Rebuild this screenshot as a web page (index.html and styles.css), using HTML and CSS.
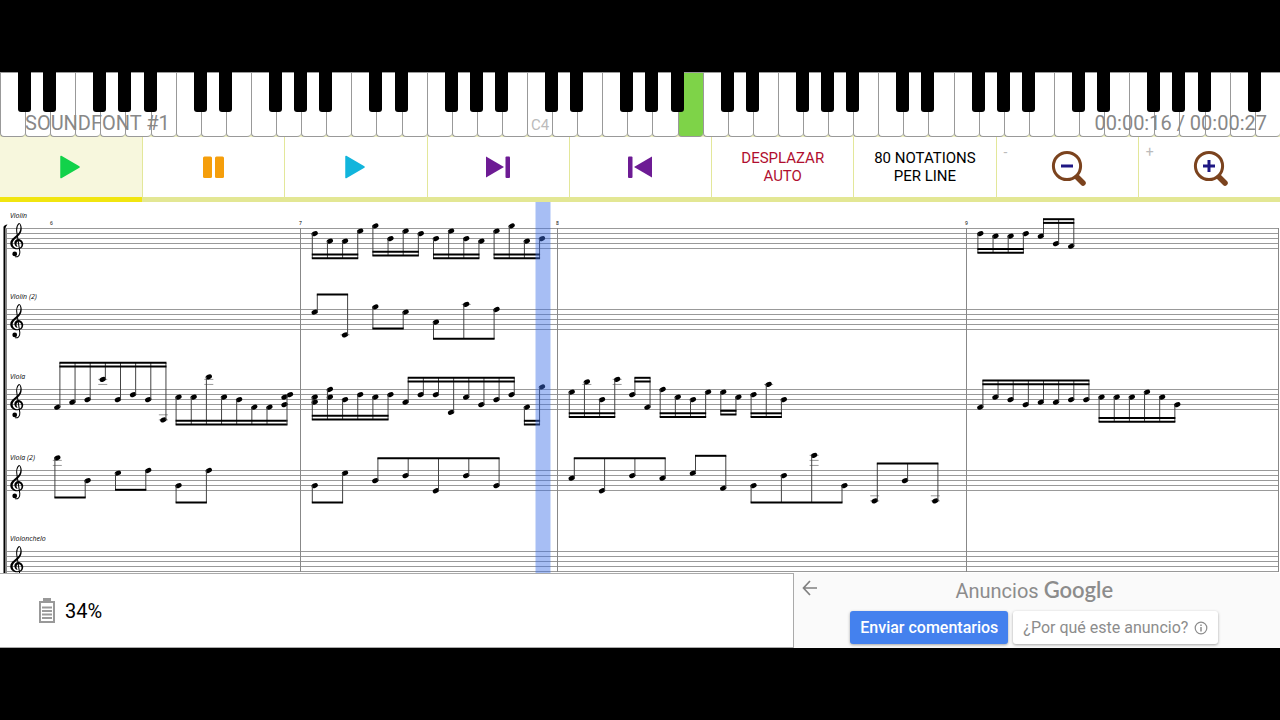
FILE: index.html
```html
<!DOCTYPE html>
<html lang="es">
<head>
<meta charset="UTF-8">
<meta name="viewport" content="width=device-width, initial-scale=1.0">
<title>MIDI Score</title>
<link rel="stylesheet" href="styles.css">
</head>
<body>
<main class="app">
  <div class="piano">
    <div class="keys" id="keys"></div>
    <span class="soundfont">SOUNDFONT #1</span>
    <span class="time">00:00:16 / 00:00:27</span>
  </div>

  <div class="toolbar">
    <button class="tool active" aria-label="Play">
      <svg width="40" height="40" viewBox="0 0 40 40"><path d="M10 9.5L28 20L10 30.5Z" fill="#12d24a" stroke="#12d24a" stroke-width="1.5" stroke-linejoin="round"/></svg>
    </button>
    <button class="tool" aria-label="Pause">
      <svg width="40" height="40" viewBox="0 0 40 40" fill="#f59e0b"><rect x="9" y="9.5" width="9" height="21.5" rx="1.5"/><rect x="21" y="9.5" width="9" height="21.5" rx="1.5"/></svg>
    </button>
    <button class="tool" aria-label="Play from here">
      <svg width="40" height="40" viewBox="0 0 40 40"><path d="M10 9.5L28 20L10 30.5Z" fill="#12b5dc" stroke="#12b5dc" stroke-width="1.5" stroke-linejoin="round"/></svg>
    </button>
    <button class="tool" aria-label="Next">
      <svg width="40" height="40" viewBox="0 0 40 40" fill="#6d1b94"><path d="M8 9.5L26 20L8 30.5Z"/><rect x="27.5" y="9.5" width="4.5" height="21.5" rx="1"/></svg>
    </button>
    <button class="tool" aria-label="Previous">
      <svg width="40" height="40" viewBox="0 0 40 40" fill="#6d1b94"><path d="M32 9.5L14 20L32 30.5Z"/><rect x="8" y="9.5" width="4.5" height="21.5" rx="1"/></svg>
    </button>
    <button class="tool red">DESPLAZAR<br>AUTO</button>
    <button class="tool">80 NOTATIONS<br>PER LINE</button>
    <button class="tool" aria-label="Zoom out">
      <span class="sign">-</span>
      <svg width="40" height="40" viewBox="0 0 40 40" fill="none"><path d="M28 28L36 36" stroke="#7b431e" stroke-width="5.5" stroke-linecap="round"/><circle cx="20" cy="19" r="13.6" fill="#fff" stroke="#7b431e" stroke-width="3"/><path d="M14 19H26" stroke="#1e1783" stroke-width="3"/></svg>
    </button>
    <button class="tool" aria-label="Zoom in">
      <span class="sign">+</span>
      <svg width="40" height="40" viewBox="0 0 40 40" fill="none"><path d="M28 28L36 36" stroke="#7b431e" stroke-width="5.5" stroke-linecap="round"/><circle cx="20" cy="19" r="13.6" fill="#fff" stroke="#7b431e" stroke-width="3"/><path d="M14 19H26M20 13V25" stroke="#1e1783" stroke-width="3"/></svg>
    </button>
  </div>

  <svg class="score" id="score" viewBox="0 0 1280 371" role="img" aria-label="Score">
    <defs>
      <g id="clef">
        <path d="M25 1C31 6 32 20 25 29C17 40 0 46 0 60C0 71 12 78 22 77C32 77 38 71 38 62C38 54 31 47 24 47C14 47 10 57 13 63C14 67 18 70 22 70C17 66 17 55 24 54C30 54 33 59 33 64C33 71 28 74 22 74C14 74 7 69 7 60C7 51 18 45 26 36C36 26 36 7 27 0Z"/>
        <path d="M26 1C16 9 18 22 20 32L28 84C29 95 22 101 14 99" fill="none" stroke="#000" stroke-width="3"/>
        <circle cx="13" cy="91" r="7"/>
      </g>
    </defs>
  </svg>

  <footer class="bottom">
    <div class="battery">
      <svg width="18" height="26" viewBox="0 0 18 26" fill="none"><path d="M5 1.5H13" stroke="#999" stroke-width="3"/><rect x="2" y="4" width="14" height="20" stroke="#999" stroke-width="2"/><path d="M4 9.5H14M4 13H14M4 16.5H14M4 20H14" stroke="#999" stroke-width="2"/></svg>
      <span>34%</span>
    </div>
    <div class="ad">
      <button class="back" aria-label="Atrás">
        <svg width="16" height="16" viewBox="0 0 16 16" fill="none" stroke="#808080" stroke-width="1.7"><path d="M15 8H1.5M8 1L1.5 8L8 15"/></svg>
      </button>
      <div class="ad-title">Anuncios <span class="brand">Google</span></div>
      <div class="ad-actions">
        <button class="ad-btn blue">Enviar comentarios</button>
        <button class="ad-btn">¿Por qué este anuncio?
          <svg width="14" height="14" viewBox="0 0 14 14" fill="none" stroke="#8c8c8c"><circle cx="7" cy="7" r="5.8" stroke-width="1.2"/><path d="M7 6V10.5M7 3.5V5" stroke-width="1.5"/></svg>
        </button>
      </div>
    </div>
  </footer>
</main>
<script src="script.js"></script>
</body>
</html>
```
FILE: styles.css
```css
* {
  box-sizing: border-box;
}
body {
  margin: 0;
  background-color: #000;
  font-family: Roboto, sans-serif;
}
button {
  font-family: inherit;
  border: none;
  margin: 0;
  padding: 0;
  cursor: pointer;
}
.app {
  padding: 72px 0;
}

/* piano */
.piano {
  position: relative;
  background-color: #eef0c0;
}
.keys {
  display: flex;
  height: 65px;
  overflow: hidden;
}
.key {
  position: relative;
  flex: 1;
  background-color: #fff;
  border: 1px solid #999;
  border-right: none;
  border-radius: 0 0 4px 4px;
}
.key.on {
  background-color: #7ed348;
}
.key.black::after {
  content: "";
  position: absolute;
  z-index: 1;
  top: -1px;
  right: -6px;
  width: 13px;
  height: 40px;
  background-color: #000;
  border-radius: 0 0 3px 3px;
}
.key-name {
  position: absolute;
  left: 3px;
  bottom: 2px;
  font-size: 15px;
  color: #bbb;
}
.soundfont,
.time {
  position: absolute;
  z-index: 2;
  bottom: 2px;
  font-size: 20px;
  color: #888;
}
.soundfont {
  left: 25px;
}
.time {
  right: 13px;
}

/* toolbar */
.toolbar {
  display: grid;
  grid-template-columns: repeat(9, 1fr);
  background-color: #fff;
}
.tool {
  position: relative;
  display: flex;
  align-items: center;
  justify-content: center;
  height: 65px;
  background-color: #fff;
  border-left: 1px solid #e3e79a;
  border-bottom: 5px solid #e3e794;
  color: #000;
  font-size: 15px;
  line-height: 18px;
}
.tool:first-child {
  border-left: none;
}
.tool.active {
  background-color: #f7f7dd;
  border-bottom-color: #f1e510;
}
.tool.red {
  color: #b00e2f;
}
.sign {
  position: absolute;
  left: 7px;
  top: 6px;
  font-size: 14px;
  color: #bbb;
}

/* score */
.score {
  display: block;
  width: 100%;
  background-color: #fff;
}
.score text {
  font-family: "Noto Sans", sans-serif;
}
.score .name {
  font-family: "Open Sans", "Noto Sans", sans-serif;
  font-size: 7px;
  font-style: italic;
}
.bar-number {
  font-size: 5px;
}
.staff-line {
  stroke: #999;
}
.bar-line {
  stroke: #888;
}
.ledger {
  stroke: #999;
}
.stem {
  stroke: #444;
}
.beam {
  stroke: #000;
  stroke-width: 2;
}
.cursor {
  fill: #3c6ee6;
  opacity: 0.45;
}

/* bottom */
.bottom {
  display: flex;
  background-color: #fafafa;
}
.battery {
  flex: 1;
  display: flex;
  align-items: center;
  gap: 9px;
  padding-left: 38px;
  background-color: #fff;
  border: 1px solid #aaa;
  border-left: none;
  font-size: 20px;
}
.ad {
  position: relative;
  width: 38%;
  height: 75px;
  padding: 3px 5px 0 0;
  color: #8c8c8c;
  text-align: center;
}
.back {
  position: absolute;
  left: 8px;
  top: 7px;
  background: none;
  line-height: 0;
}
.ad-title {
  font-size: 20px;
  line-height: 28px;
}
.brand {
  font-family: Lato, sans-serif;
  font-size: 22px;
  font-weight: 600;
}
.ad-actions {
  display: flex;
  justify-content: center;
  gap: 5px;
  padding-top: 6px;
}
.ad-btn {
  display: flex;
  align-items: center;
  gap: 6px;
  height: 33px;
  padding: 0 10px;
  background-color: #fff;
  color: #8c8c8c;
  border-radius: 3px;
  box-shadow: 0 1px 3px rgba(0, 0, 0, 0.35);
  font-size: 16px;
}
.ad-btn.blue {
  background-color: #4481ee;
  color: #fff;
  font-weight: 500;
}
```
FILE: script.js
```js
// ---- piano ----
var KEY_COUNT = 51;
var C4_KEY = 21;
var PLAYING_KEY = 27;
var keysHTML = '';
for (var i = 0; i < KEY_COUNT; i++) {
  var note = i % 7; // 0 = C
  var cls = 'key';
  if (note !== 2 && note !== 6 && i < KEY_COUNT - 1) cls += ' black';
  if (i === PLAYING_KEY) cls += ' on';
  keysHTML += '<div class="' + cls + '">' + (i === C4_KEY ? '<span class="key-name">C4</span>' : '') + '</div>';
}
document.getElementById('keys').innerHTML = keysHTML;

// ---- score ----
var STEP = 2.53; // half of the space between two staff lines
var BEAT = 15.15;
var BARS = { 6: 57.3, 7: 314.7, 8: 571.7, 9: 980.3 };

// group: [bar, first slot, slot spacing, steps below the top line, beam y from the top line, beams]
// an array in place of a step is a chord
var staves = [
  { name: 'Violín', top: 26.5, groups: [
    [7, 0, 1, [2, 5, 5, 1], 29.7, 2],
    [7, 4, 1, [-1, 4, 1, 2], 27, 2],
    [7, 8, 1, [4, 1, 4, 5], 29.7, 2],
    [7, 12, 1, [1, -1, 5, 4], 29.7, 2],
    [9, 0, 1, [2, 3, 3, 2], 24.3, 2],
    [9, 4, 1, [3, 6, 7], -9.3, 2]
  ]},
  { name: 'Violín (2)', top: 107.5, groups: [
    [7, 0, 2, [1, 10], -15, 1],
    [7, 4, 2, [-1, 1], 19, 1],
    [7, 8, 2, [5, -2, 0], 29.3, 1]
  ]},
  { name: 'Viola', top: 187.5, groups: [
    [6, 0, 1, [7, 5, 4, -4, 4, 2, 4, 12], -26.7, 2],
    [6, 8, 1, [3, 3, -5, 3, 4, 7, 7], 35, 2, 287],
    [7, 0, 1, [[3, 5], [0, 3], 4, 2, 3, 2], 30, 2],
    [7, 6, 1, [5, 2, 2, 9, 3, 6, 4, 2], -11.7, 2],
    [7, 14, 1, [7, -1], 35, 2],
    [8, 0, 1, [1, -3, 4, -4], 27.5, 2],
    [8, 4, 1, [2, 7], -11.7, 2],
    [8, 6, 1, [0, 3, 4, 1], 27.5, 2],
    [8, 10, 1, [1, 3], 25, 2],
    [8, 12, 1, [2, -2, 4], 27.5, 2],
    [9, 0, 1, [7, 3, 4, 6, 5, 5, 4, 4], -9, 2],
    [9, 8, 1, [3, 3, 3, 1, 3, 6], 32.3, 2]
  ]},
  { name: 'Viola (2)', top: 268.5, groups: [
    [6, 0, 2, [-5, 4], 27, 1],
    [6, 4, 2, [1, 0], 19.3, 1],
    [6, 8, 2, [6, 0], 32, 1],
    [7, 0, 2, [6, 1], 32, 1],
    [7, 4, 2, [4, 2, 8, 2, 6], -12.3, 1],
    [8, 0, 2, [3, 8, 2, 3], -12.3, 1],
    [8, 8, 2, [1, 7], -14.7, 1],
    [8, 12, 2, [6, 2, -6, 6], 32, 1],
    [8, 20, 2, [12, 4, 12], -7, 1]
  ]},
  { name: 'Violonchelo', top: 349.5, groups: [] }
];

function line(cls, x1, y1, x2, y2) {
  return '<line class="' + cls + '" x1="' + x1 + '" y1="' + y1 + '" x2="' + x2 + '" y2="' + y2 + '"/>';
}

function noteHead(x, top, step) {
  var y = top + step * STEP;
  var out = '';
  for (var s = -2; s >= step; s -= 2) out += line('ledger', x - 4.5, top + s * STEP, x + 4.5, top + s * STEP);
  for (s = 10; s <= step; s += 2) out += line('ledger', x - 4.5, top + s * STEP, x + 4.5, top + s * STEP);
  out += '<ellipse cx="' + x + '" cy="' + y + '" rx="3.3" ry="2.3" transform="rotate(-25 ' + x + ' ' + y + ')"/>';
  return out;
}

function drawGroup(top, g) {
  var beamY = top + g[4];
  var side = g[4] < 0 ? 2.6 : -2.4; // stems up on the right, down on the left
  var out = '';
  var firstX, lastX;
  for (var i = 0; i < g[3].length; i++) {
    var x = BARS[g[0]] + (g[1] + i * g[2]) * BEAT;
    var chord = [].concat(g[3][i]);
    for (var j = 0; j < chord.length; j++) out += noteHead(x, top, chord[j]);
    var from = g[4] < 0 ? Math.max.apply(null, chord) : Math.min.apply(null, chord);
    lastX = x + side;
    if (i === 0) firstX = lastX;
    out += line('stem', lastX, top + from * STEP, lastX, beamY);
  }
  if (g[6]) lastX = g[6];
  for (var b = 0; b < g[5]; b++) {
    var y = beamY + (g[4] < 0 ? 3.7 : -3.7) * b;
    out += line('beam', firstX - 0.5, y, lastX + 0.5, y);
  }
  return out;
}

var svg = '';
staves.forEach(function (staff) {
  for (var l = 0; l < 5; l++) svg += line('staff-line', 7, staff.top + l * 5, 1279, staff.top + l * 5);
  svg += '<text class="name" x="10" y="' + (staff.top - 11) + '">' + staff.name + '</text>';
  svg += '<use href="#clef" transform="translate(10.3 ' + (staff.top - 5.5) + ') scale(0.34)"/>';
  staff.groups.forEach(function (g) { svg += drawGroup(staff.top, g); });
});

// last chord of bar 6 in the viola, heads on both sides of the stem
svg += noteHead(284.5, 187.5, 3) + noteHead(284.5, 187.5, 6) + noteHead(290, 187.5, 2);
svg += line('stem', 287, 192.5, 287, 222.5);

[300.5, 557.5, 966.5, 1278.5].forEach(function (x) { svg += line('bar-line', x, 26, x, 370); });
[[50, 6], [299, 7], [556, 8], [965, 9]].forEach(function (n) {
  svg += '<text class="bar-number" x="' + n[0] + '" y="23">' + n[1] + '</text>';
});

// bracket and playback cursor
svg += '<path d="M3.5 371V25Q4 23 7.5 22.5Q6 24 5.5 26V371Z"/>' + line('bar-line', 6.5, 26, 6.5, 371);
svg += '<rect class="cursor" x="535.5" y="0" width="15" height="371"/>';

document.getElementById('score').insertAdjacentHTML('beforeend', svg);
```
